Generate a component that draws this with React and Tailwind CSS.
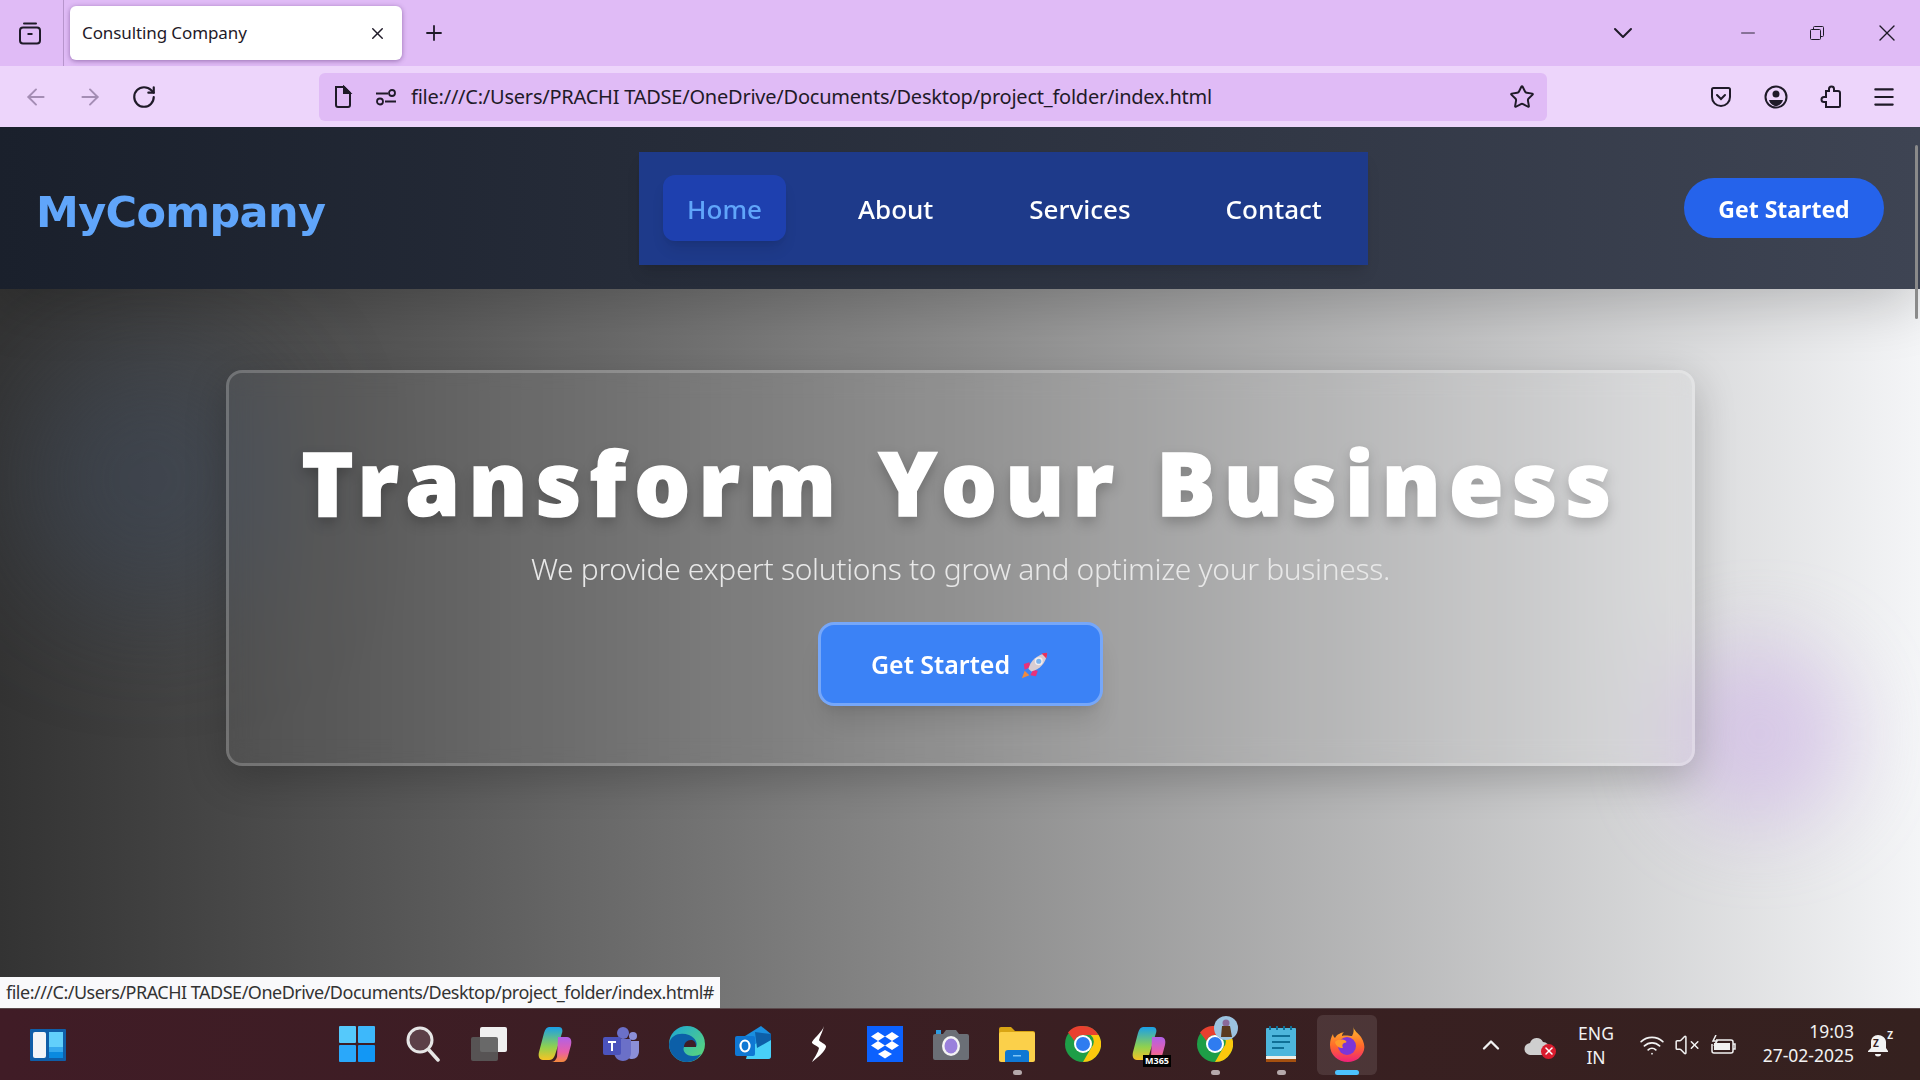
import React from "react"
import { ArrowLeft, ArrowRight, ChevronDown, ChevronUp, Menu, Minus, Plus, RotateCw, Star, VolumeX, Wifi, X } from "lucide-react"

const uiFont = "font-['Noto_Sans','Open_Sans',sans-serif]"

function Rocket({ className }) {
  return (
    <svg viewBox="0 0 32 32" className={className}>
      <path d="M5 22l-3 8 8-3z" fill="#f08a3c" />
      <path d="M10 13l-6 2 1 6 6-3zM19 22l-2 6-6-1 3-6z" fill="#e8317a" />
      <path d="M9 20C11 12 18 5 29 3c-1 11-8 18-17 20z" fill="#d9cdd2" />
      <path d="M23 3.800c2-.5 4-.8 6-.8 0 2-.3 4-.9 6z" fill="#e8315a" />
      <circle cx="20" cy="12" r="3.500" fill="#7db4ee" stroke="#f3eef0" strokeWidth="1.500" />
    </svg>
  )
}

function TabsIcon() {
  return (
    <svg viewBox="0 0 24 24" className="h-6 w-6" fill="none" stroke="#1f1a28" strokeWidth="2">
      <path d="M6 2.500h12" strokeLinecap="round" />
      <rect x="2" y="6.500" width="20" height="16" rx="3" />
      <path d="M9.500 13h5" />
    </svg>
  )
}

function DocIcon() {
  return (
    <svg viewBox="0 0 20 24" className="h-6 w-5" fill="none" stroke="#1f1a28" strokeWidth="2">
      <path d="M3 2h8l6 6v12a2 2 0 0 1-2 2H5a2 2 0 0 1-2-2z" />
      <path d="M11 2l6 6h-6z" fill="#1f1a28" />
    </svg>
  )
}

function PermIcon() {
  return (
    <svg viewBox="0 0 22 18" className="h-[18px] w-[22px]" fill="none" stroke="#1f1a28" strokeWidth="1.800">
      <path d="M1 5.500h12M10 13.500h11" />
      <circle cx="17" cy="5" r="3" />
      <circle cx="5" cy="13.500" r="3" />
    </svg>
  )
}

function PocketIcon() {
  return (
    <svg viewBox="0 0 22 24" className="h-6 w-[22px]" fill="none" stroke="#1f1a28" strokeWidth="2">
      <path d="M2 4.500c0-1 .8-1.500 1.500-1.500h15c.8 0 1.500.5 1.500 1.500V12c0 5-4 9-9 9s-9-4-9-9z" />
      <path d="M7 10l4 4 4-4" strokeLinecap="round" />
    </svg>
  )
}

function AccountIcon() {
  return (
    <svg viewBox="0 0 24 24" className="h-6 w-6" fill="none">
      <circle cx="12" cy="12" r="10.500" stroke="#1f1a28" strokeWidth="2" />
      <circle cx="12" cy="9" r="3.500" fill="#1f1a28" />
      <path d="M5 15h14c-1 3.500-4 6-7 6s-6-2.500-7-6z" fill="#1f1a28" />
    </svg>
  )
}

function PuzzleIcon() {
  return (
    <svg viewBox="0 0 22 24" className="h-6 w-[22px]" fill="none" stroke="#1f1a28" strokeWidth="2">
      <path d="M9 6V4a2.500 2.500 0 0 1 5 0v2h4a2 2 0 0 1 2 2v13a1 1 0 0 1-1 1H6v-5H4a2.500 2.500 0 0 1 0-5h2V6z" />
    </svg>
  )
}

function RestoreIcon() {
  return (
    <svg viewBox="0 0 14 14" className="h-[14px] w-[14px]" fill="none" stroke="#1f1a28" strokeWidth="1">
      <rect x="0.500" y="3.500" width="10" height="10" rx="1" />
      <path d="M3.500 3.500V1.500a1 1 0 0 1 1-1h8a1 1 0 0 1 1 1v8a1 1 0 0 1-1 1h-2" />
    </svg>
  )
}

function WidgetsIcon() {
  return (
    <svg viewBox="0 0 36 32" className="h-8 w-9">
      <rect width="36" height="32" rx="1" fill="#0f5ea8" />
      <rect x="3" y="3" width="13" height="26" rx="2" fill="#f3f5f7" />
      <rect x="19" y="3" width="14" height="15" fill="#62d0fb" />
      <rect x="19" y="18" width="14" height="5" fill="#35a9ee" />
      <rect x="19" y="23" width="14" height="6" fill="#0a8ae0" />
    </svg>
  )
}

function WindowsIcon() {
  return (
    <svg viewBox="0 0 36 36" className="h-9 w-9">
      <rect x="0" y="0" width="17" height="17" rx="1" fill="#55c9fb" />
      <rect x="19" y="0" width="17" height="17" rx="1" fill="#3db8fb" />
      <rect x="0" y="19" width="17" height="17" rx="1" fill="#2aa8fa" />
      <rect x="19" y="19" width="17" height="17" rx="1" fill="#1297f5" />
    </svg>
  )
}

function SearchIcon() {
  return (
    <svg viewBox="0 0 34 36" className="h-9 w-[34px]" fill="none">
      <circle cx="14" cy="14" r="12" fill="#5c3f47" stroke="#e6e6e6" strokeWidth="3" />
      <path d="M23 24l9 10" stroke="#e6e6e6" strokeWidth="3.500" strokeLinecap="round" />
    </svg>
  )
}

function TaskViewIcon() {
  return (
    <svg viewBox="0 0 36 34" className="h-[34px] w-9">
      <rect x="9" y="0" width="27" height="25" rx="2" fill="#f0f0f0" />
      <rect x="0" y="10" width="27" height="24" rx="2" fill="#5a5a5a" opacity="0.900" />
    </svg>
  )
}

function CopilotIcon() {
  return (
    <svg viewBox="0 0 34 36" className="h-9 w-[34px]">
      <defs>
        <linearGradient id="copA" x1="0" y1="0" x2="0" y2="1">
          <stop offset="0" stopColor="#1aa0e8" />
          <stop offset="0.600" stopColor="#8fd14f" />
          <stop offset="1" stopColor="#f7c325" />
        </linearGradient>
        <linearGradient id="copB" x1="0" y1="0" x2="0" y2="1">
          <stop offset="0" stopColor="#b061e8" />
          <stop offset="0.600" stopColor="#e85fa8" />
          <stop offset="1" stopColor="#f58a3c" />
        </linearGradient>
      </defs>
      <path d="M11 1h10c3 0 4 3 3 6l-7 22c-1 3-3 5-6 5H5c-4 0-5-4-4-8l5-19c1-4 3-6 5-6z" fill="url(#copA)" />
      <path d="M20 11h9c4 0 5 4 4 8l-3 11c-1 4-3 6-6 6H13c3 0 5-2 6-5z" fill="url(#copB)" />
    </svg>
  )
}

function TeamsIcon() {
  return (
    <svg viewBox="0 0 36 34" className="h-[34px] w-9">
      <circle cx="20" cy="6" r="6" fill="#6b70c8" />
      <circle cx="30" cy="9" r="4" fill="#8b8fd8" />
      <path d="M24 14h12v10c0 5-3 8-7 8-3 0-5-2-5-5z" fill="#8b8fd8" />
      <path d="M11 12h17v14c0 5-4 8-8 8-5 0-9-4-9-9z" fill="#6b70c8" />
      <rect x="0" y="10" width="18" height="18" rx="2" fill="#4b53bc" />
      <path d="M5 14h8v2h-3v8H8v-8H5z" fill="#fff" />
    </svg>
  )
}

function EdgeIcon() {
  return (
    <svg viewBox="0 0 36 36" className="h-9 w-9">
      <defs>
        <linearGradient id="edgeA" x1="0" y1="0" x2="1" y2="1">
          <stop offset="0" stopColor="#1ba6d8" />
          <stop offset="1" stopColor="#62da6f" />
        </linearGradient>
      </defs>
      <circle cx="18" cy="18" r="18" fill="url(#edgeA)" />
      <path d="M0 18C2 8 12 6 20 9c7 3 9 9 7 12H15c-2 4 2 9 9 9 3 0 6-1 8-2-3 5-8 8-14 8C8 36 0 28 0 18z" fill="#0c5fa8" />
      <path d="M15 21c0-4 3-7 7-7 3 0 5 2 5 7z" fill="#3f1c26" />
    </svg>
  )
}

function OutlookIcon() {
  return (
    <svg viewBox="0 0 36 36" className="h-9 w-9">
      <path d="M10 10L26 0l10 8v22a3 3 0 0 1-3 3H13z" fill="#1a8fe0" />
      <path d="M14 22l22-14v22a3 3 0 0 1-3 3H11z" fill="#48d0f8" />
      <path d="M20 6L36 8v6L22 22z" fill="#0d5fa8" />
      <rect x="0" y="10" width="20" height="20" rx="2" fill="#0f78d4" />
      <ellipse cx="10" cy="20" rx="4.500" ry="5.500" fill="none" stroke="#fff" strokeWidth="2.200" />
    </svg>
  )
}

function StreamIcon() {
  return (
    <svg viewBox="0 0 18 36" className="h-9 w-[18px]">
      <path d="M14 0C12 6 6 10 2 16c-1 2 6 4 7 6-1 5-5 10-7 14 5-4 12-9 14-15 1-3-7-5-7-7 1-4 4-9 5-14z" fill="#fff" />
    </svg>
  )
}

function DropboxIcon() {
  return (
    <svg viewBox="0 0 36 36" className="h-9 w-9">
      <rect width="36" height="36" fill="#0b61fe" />
      <path d="M11 6l7 4.500-7 4.500-7-4.500zM25 6l7 4.500-7 4.500-7-4.500zM11 15l7 4.500-7 4.500-7-4.500zM25 15l7 4.500-7 4.500-7-4.500zM18 24l7 4-7 4.500-7-4.500z" fill="#fff" />
    </svg>
  )
}

function CameraIcon() {
  return (
    <svg viewBox="0 0 36 32" className="h-8 w-9">
      <path d="M2 6h8l3-4h10l3 4h8a2 2 0 0 1 2 2v22a2 2 0 0 1-2 2H2a2 2 0 0 1-2-2V8a2 2 0 0 1 2-2z" fill="#6b6f76" />
      <rect x="3" y="2" width="5" height="4" fill="#2b9be0" />
      <ellipse cx="18" cy="18" rx="9" ry="10" fill="#f3f3f3" />
      <ellipse cx="18" cy="18" rx="6.500" ry="7.500" fill="#9a80dc" />
    </svg>
  )
}

function FolderIcon() {
  return (
    <svg viewBox="0 0 36 36" className="h-9 w-9">
      <path d="M0 3a2 2 0 0 1 2-2h10l4 4h18a2 2 0 0 1 2 2v4H0z" fill="#d9a514" />
      <rect x="0" y="6" width="36" height="30" rx="2" fill="#fbd04a" />
      <path d="M6 36v-9a3 3 0 0 1 3-3h18a3 3 0 0 1 3 3v9z" fill="#0f78d4" />
      <rect x="14" y="29" width="8" height="1.500" fill="#7fc4f5" />
    </svg>
  )
}

function ChromeIcon() {
  return (
    <svg viewBox="0 0 36 36" className="h-9 w-9">
      <circle cx="18" cy="18" r="18" fill="#1e9e47" />
      <path d="M18 0a18 18 0 0 1 15.600 9H18a9 9 0 0 0-8.500 6L3 6.500A18 18 0 0 1 18 0z" fill="#e8402f" />
      <path d="M33.600 9A18 18 0 0 1 18 36l7.800-13.500a9 9 0 0 0 0-13.500z" fill="#fbc80d" />
      <circle cx="18" cy="18" r="9" fill="#fff" />
      <circle cx="18" cy="18" r="7" fill="#2f7cf0" />
    </svg>
  )
}

function ProfileBadge() {
  return (
    <svg viewBox="0 0 24 24" className="absolute right-[7px] top-[1px] h-6 w-6">
      <circle cx="12" cy="12" r="12" fill="#9cc3e0" />
      <circle cx="12" cy="7" r="3.500" fill="#8a6a9a" />
      <path d="M8 10h8l2 11H7z" fill="#5a3a20" />
    </svg>
  )
}

function NotepadIcon() {
  return (
    <svg viewBox="0 0 30 36" className="h-9 w-[30px]">
      <rect y="2" width="30" height="28" rx="1" fill="#4db6dc" />
      <rect y="30" width="30" height="3" fill="#f0efe8" />
      <rect y="33" width="30" height="3" fill="#a5500f" />
      <path d="M6 10h18M6 16h18M6 22h12" stroke="#0f6f96" strokeWidth="2" />
      <path d="M4 0v4M11 0v4M18 0v4M25 0v4" stroke="#0f6f96" strokeWidth="2" />
    </svg>
  )
}

function FirefoxIcon() {
  return (
    <svg viewBox="0 0 36 36" className="h-9 w-9">
      <defs>
        <linearGradient id="ffA" x1="0" y1="0" x2="0" y2="1">
          <stop offset="0" stopColor="#ffbd2e" />
          <stop offset="0.550" stopColor="#ff6a2a" />
          <stop offset="1" stopColor="#f0207a" />
        </linearGradient>
      </defs>
      <path d="M24 0c1 5 5 7 8 11 3 5 4 9 3 13-2 7-8 12-16 12C9 36 1 29 1 19c0-4 1-8 3-11 0 2 1 3 2 4 2-4 6-5 9-6-2 2-2 3-2 4 3-1 8 0 10 0 2-3 2-7 1-10z" fill="url(#ffA)" />
      <circle cx="18" cy="20" r="9" fill="#7d35d8" />
      <path d="M6 16c3-3 8-3 11-1 1 1 0 2-2 2-2 1-2 3-1 5-4 0-7-2-8-6z" fill="#ff9a2a" />
    </svg>
  )
}

function CloudX() {
  return (
    <div className="relative h-7 w-8">
      <svg viewBox="0 0 26 20" className="absolute left-0 top-1 h-5 w-[26px]">
        <path d="M7 20a6 6 0 0 1-1-12 7 7 0 0 1 13-1 6 6 0 0 1 0 13z" fill="#cfcfcf" />
      </svg>
      <span className="absolute bottom-0 right-0 flex h-[15px] w-[15px] items-center justify-center rounded-full bg-[#d91c2e]">
        <X className="h-3 w-3 text-white" strokeWidth={3} />
      </span>
    </div>
  )
}

function BatteryIcon() {
  return (
    <svg viewBox="0 0 26 20" className="h-5 w-[26px]" fill="none" stroke="#f2f2f2" strokeWidth="1.500">
      <path d="M6 5h15a2 2 0 0 1 2 2v9a2 2 0 0 1-2 2H4a2 2 0 0 1-2-2V9" />
      <path d="M23 9h2v5h-2" />
      <rect x="4" y="8" width="16" height="7" fill="#f2f2f2" stroke="none" />
      <path d="M6 0L3 6h4l-3 5" stroke="#f2f2f2" />
    </svg>
  )
}

function BellIcon() {
  return (
    <div className="relative h-[26px] w-[22px]">
      <svg viewBox="0 0 22 26" className="h-[26px] w-[22px]">
        <path d="M10 3c-4 0-7 3-7 7v6l-3 3v1h20v-1l-2-3v-6c0-4-4-7-8-7z" fill="#f2f2f2" />
        <path d="M7 22a3 2.500 0 0 0 6 0z" fill="#f2f2f2" />
      </svg>
      <span className="absolute left-[5px] top-[6px] text-[10px] leading-none font-bold text-[#35201f]">Z</span>
      <span className="absolute -right-[3px] -top-[2px] text-[10px] leading-none font-bold">Z</span>
    </div>
  )
}

function TaskbarSlot({ children, dot, active }) {
  return (
    <div className={`relative flex h-[60px] w-[60px] mx-[3px] items-center justify-center rounded-md pb-[2px] ${active ? "bg-white/10" : ""}`}>
      {children}
      {dot && <span className="absolute bottom-0 h-[5px] w-[9px] rounded-full bg-[#b5a9ab]" />}
      {active && <span className="absolute bottom-0 h-[5px] w-6 rounded-full bg-[#4cc2ff]" />}
    </div>
  )
}

function BrowserChrome() {
  return (
    <div className={`${uiFont} text-[#1f1a28]`}>
      {/* Tab strip */}
      <div className="flex h-[66px] items-center bg-[#e0bbf6]">
        <div className="flex h-full w-[64px] items-center justify-center border-r border-[#b795cc] pr-1">
          <TabsIcon />
        </div>
        <div className="ml-[6px] flex h-[54px] w-[332px] items-center justify-between rounded-md bg-white pl-3 pr-[15px] shadow-[0_1px_5px_rgba(60,20,90,0.45)]">
          <span className="text-[17px] tracking-[-0.1px]">Consulting Company</span>
          <X className="h-[19px] w-[19px]" strokeWidth={1.8} />
        </div>
        <Plus className="ml-[20px] h-6 w-6" strokeWidth={1.8} />
        <ChevronDown className="ml-auto mr-[98px] h-8 w-8" strokeWidth={1.5} />
        <Minus className="mr-[51px] h-[22px] w-[22px]" strokeWidth={1} />
        <RestoreIcon />
        <X className="ml-[49px] mr-[19px] h-7 w-7" strokeWidth={1.2} />
      </div>

      {/* Address bar */}
      <div className="flex h-[61px] items-center bg-[#edd5fb]">
        <ArrowLeft className="ml-[23px] h-[26px] w-[26px] text-[#a48db4]" strokeWidth={1.8} />
        <ArrowRight className="ml-[28px] h-[26px] w-[26px] text-[#a48db4]" strokeWidth={1.8} />
        <RotateCw className="ml-[28px] h-[26px] w-[26px]" strokeWidth={2} />
        <div className="ml-[162px] flex h-12 w-[1228px] items-center rounded-md bg-[#e0bbf6] pl-[14px] pr-[12px]">
          <DocIcon />
          <span className="ml-[22px]"><PermIcon /></span>
          <span className="ml-[14px] text-[20px] tracking-[-0.23px]">file:///C:/Users/PRACHI TADSE/OneDrive/Documents/Desktop/project_folder/index.html</span>
          <Star className="ml-auto h-[26px] w-[26px]" strokeWidth={1.8} />
        </div>
        <div className="ml-auto mr-[23px] flex items-center gap-[32px]">
          <PocketIcon />
          <AccountIcon />
          <PuzzleIcon />
          <Menu className="-ml-[3px] h-[26px] w-[26px]" strokeWidth={2} />
        </div>
      </div>
    </div>
  )
}

function SitePage() {
  return (
    <div className={`${uiFont} relative min-h-0 flex-1 overflow-hidden`}>
      {/* Navbar */}
      <nav className="relative z-10 flex h-[162px] items-center justify-between bg-gradient-to-r from-[#1a202c] to-[#3e4453] pl-[36px] pr-[36px] shadow-[0_12px_60px_rgba(0,0,0,0.22)]">
        <a href="#" className="mt-[8px] w-[603px] font-['DejaVu_Sans',sans-serif] text-[43px] leading-none font-bold tracking-[-0.65px] text-[#60a5fa]">MyCompany</a>
        <div className="flex h-[113px] w-[729px] items-center bg-[#1e3a8a] px-6 text-[26px] font-medium text-white shadow-lg">
          <a href="#" className="flex h-[66px] w-[123px] items-center justify-center rounded-xl bg-[#1e40af] pt-[2px] text-[#60a5fa] shadow-lg">Home</a>
          <a href="#" className="ml-[72px] pt-[2px]">About</a>
          <a href="#" className="ml-[96px] pt-[2px]">Services</a>
          <a href="#" className="ml-[95px] pt-[2px]">Contact</a>
        </div>
        <a href="#" className="ml-auto flex h-[60px] w-[200px] items-center justify-center rounded-full bg-[#2563eb] pt-[2px] text-[23px] font-bold text-white">Get Started</a>
      </nav>

      {/* Hero */}
      <section className="relative h-[719px] overflow-hidden bg-gradient-to-r from-[#333333] via-[#8c8c8c] to-[#f4f5f7] pt-[81px]">
        <div className="absolute left-[20px] top-[60px] h-[260px] w-[260px] rounded-full bg-[#3d4a5c]/50 blur-[60px]" />
        <div className="absolute left-[1670px] top-[355px] h-[180px] w-[180px] rounded-full bg-[#c9a9e8]/45 blur-[40px]" />
        <div className="relative ml-[226px] flex h-[396px] w-[1469px] flex-col items-center rounded-2xl border-[3px] border-white/20 bg-white/5 pt-[65px] shadow-[0_12px_40px_rgba(0,0,0,0.22)] backdrop-blur-md">
          <h1 className="text-[88px] leading-[88px] font-black tracking-[8.300px] [word-spacing:3px] text-white [-webkit-text-stroke:1.500px_white] [text-shadow:0_6px_14px_rgba(0,0,0,0.25)]">Transform Your Business</h1>
          <p className="mt-[20px] text-[30px] font-light tracking-[-0.33px] text-[#e8e8e8]">We provide expert solutions to grow and optimize your business.</p>
          <a href="#" className="mt-[31px] flex h-[84px] w-[285px] items-center justify-center gap-[10px] rounded-2xl border-[3px] border-white/30 bg-[#3b82f6] pt-[2px] text-[25px] font-semibold text-white shadow-xl">
            Get Started
            <Rocket className="h-[30px] w-[30px]" />
          </a>
        </div>
      </section>

      {/* Overlays */}
      <div className="absolute right-[2px] top-[18px] z-20 h-[174px] w-[3px] rounded-full bg-[#8a8a8a]" />
      <div className="absolute bottom-0 left-0 z-20 flex h-[31px] w-[720px] items-center whitespace-nowrap bg-[#f9f9fb] pl-[6px] text-[18px] tracking-[-0.5px] text-[#333]">
        file:///C:/Users/PRACHI TADSE/OneDrive/Documents/Desktop/project_folder/index.html#
      </div>
    </div>
  )
}

function Taskbar() {
  return (
    <div className={`${uiFont} flex h-[72px] items-center border-t border-[#5a4a4c] bg-gradient-to-r from-[#401c26] to-[#35211f] text-[#f2f2f2]`}>
      <div className="ml-[30px] w-[294px]"><WidgetsIcon /></div>
      <TaskbarSlot><WindowsIcon /></TaskbarSlot>
      <TaskbarSlot><SearchIcon /></TaskbarSlot>
      <TaskbarSlot><TaskViewIcon /></TaskbarSlot>
      <TaskbarSlot><CopilotIcon /></TaskbarSlot>
      <TaskbarSlot><TeamsIcon /></TaskbarSlot>
      <TaskbarSlot><EdgeIcon /></TaskbarSlot>
      <TaskbarSlot><OutlookIcon /></TaskbarSlot>
      <TaskbarSlot><StreamIcon /></TaskbarSlot>
      <TaskbarSlot><DropboxIcon /></TaskbarSlot>
      <TaskbarSlot><CameraIcon /></TaskbarSlot>
      <TaskbarSlot dot><FolderIcon /></TaskbarSlot>
      <TaskbarSlot><ChromeIcon /></TaskbarSlot>
      <TaskbarSlot>
        <CopilotIcon />
        <span className="absolute bottom-[8px] right-[8px] bg-black px-[2px] text-[9px] leading-[12px] font-bold text-white">M365</span>
      </TaskbarSlot>
      <TaskbarSlot dot>
        <ChromeIcon />
        <ProfileBadge />
      </TaskbarSlot>
      <TaskbarSlot dot><NotepadIcon /></TaskbarSlot>
      <TaskbarSlot active><FirefoxIcon /></TaskbarSlot>

      <ChevronUp className="ml-[97px] h-7 w-7" strokeWidth={2} />
      <div className="ml-[19px]"><CloudX /></div>
      <div className="ml-[17px] w-[46px] text-center text-[17.500px] leading-[24px]">ENG<br />IN</div>
      <Wifi className="ml-[20px] h-[26px] w-[26px]" strokeWidth={1.6} />
      <VolumeX className="ml-[9px] h-[26px] w-[26px]" strokeWidth={1.4} />
      <div className="ml-[10px]"><BatteryIcon /></div>
      <div className="ml-[22px] -mt-[4px] w-[96px] text-right text-[17.500px] leading-[24px] whitespace-nowrap">19:03<br />27-02-2025</div>
      <div className="ml-[14px]"><BellIcon /></div>
    </div>
  )
}

export default function App() {
  return (
    <div className="flex h-screen w-full flex-col overflow-hidden">
      <BrowserChrome />
      <SitePage />
      <Taskbar />
    </div>
  )
}
